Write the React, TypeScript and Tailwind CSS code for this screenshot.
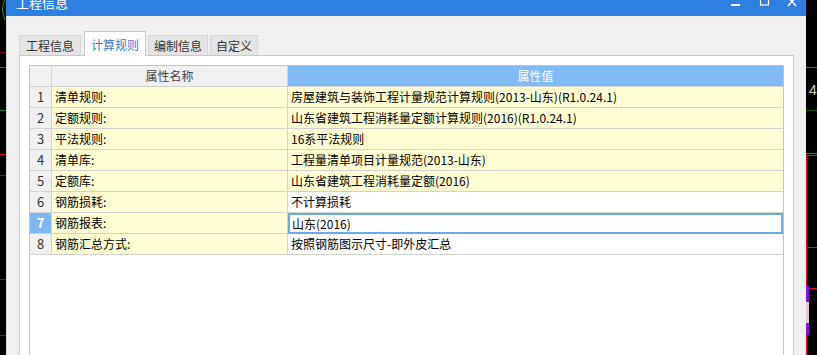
import React from "react";

const rows = [
  { n: 1, name: "清单规则:", value: "房屋建筑与装饰工程计量规范计算规则(2013-山东)(R1.0.24.1)", yellow: true },
  { n: 2, name: "定额规则:", value: "山东省建筑工程消耗量定额计算规则(2016)(R1.0.24.1)", yellow: true },
  { n: 3, name: "平法规则:", value: "16系平法规则", yellow: true },
  { n: 4, name: "清单库:", value: "工程量清单项目计量规范(2013-山东)", yellow: true },
  { n: 5, name: "定额库:", value: "山东省建筑工程消耗量定额(2016)", yellow: true },
  { n: 6, name: "钢筋损耗:", value: "不计算损耗", yellow: false },
  { n: 7, name: "钢筋报表:", value: "山东(2016)", yellow: false, selected: true },
  { n: 8, name: "钢筋汇总方式:", value: "按照钢筋图示尺寸-即外皮汇总", yellow: false },
];

const font = { fontFamily: '"Noto Sans CJK SC", "Noto Sans", sans-serif' };

function LeftStrip() {
  return (
    <svg width="6" height="355" className="block shrink-0">
      <rect width="6" height="355" fill="#000" />
      <path d="M5 0 Q0 8 5 20" stroke="#1f9a2a" strokeWidth="1" fill="none" />
      <rect x="0" y="52" width="6" height="1" fill="#7a0a0a" />
      <rect x="0" y="67" width="6" height="1" fill="#1d7d22" />
      <rect x="0" y="110" width="6" height="1" fill="#1d7d22" />
      <rect x="0" y="154" width="6" height="1" fill="#e01010" />
      <rect x="0" y="175" width="6" height="1" fill="#8a0c0c" />
      <rect x="0" y="279" width="6" height="1" fill="#8a0c0c" />
      <rect x="0" y="335" width="6" height="1" fill="#8a0c0c" />
    </svg>
  );
}

function RightStrip() {
  return (
    <svg width="11" height="355" className="block shrink-0">
      <rect width="11" height="355" fill="#000" />
      <rect x="0" y="67" width="11" height="1" fill="#1d8d22" />
      <text x="3" y="95" fontSize="14" fill="#cfcfcf" fontFamily="Liberation Sans, sans-serif">4</text>
      <rect x="0" y="110" width="11" height="1" fill="#0f5a12" />
      <rect x="0" y="153" width="11" height="1" fill="#6b6b10" />
      <rect x="0" y="155" width="11" height="1" fill="#e01010" />
      <rect x="0" y="155" width="1" height="200" fill="#e01010" />
      <rect x="0" y="247" width="11" height="1" fill="#e01010" />
      <rect x="0" y="288" width="11" height="1" fill="#e01010" />
      <rect x="0" y="286" width="3" height="16" fill="#8a10e0" />
      <rect x="0" y="302" width="3" height="21" fill="#e8c8c8" />
      <rect x="0" y="323" width="3" height="12" fill="#8a10e0" />
    </svg>
  );
}

function WindowControls() {
  return (
    <svg width="66" height="16" className="block">
      <rect x="0" y="4" width="9" height="2" fill="#fff" />
      <rect x="29.5" y="-4" width="8" height="9" stroke="#fff" strokeWidth="1.2" fill="none" />
      <path d="M57 -3 L65 6 M65 -3 L57 6" stroke="#fff" strokeWidth="1.6" />
    </svg>
  );
}

export default function App() {
  return (
    <div className="flex w-[817px] h-[355px] overflow-hidden bg-black" style={font}>
      <LeftStrip />
      <div className="flex flex-col w-[800px] shrink-0 bg-[#f0f0f0]">
        <div className="flex h-[16px] shrink-0 items-start justify-between bg-[#2d7fe0] overflow-hidden pl-[10px] pr-[9px]">
          <span className="text-[13px] leading-[13px] text-white mt-[-4px]">工程信息</span>
          <WindowControls />
        </div>
        <div className="flex flex-col flex-1 px-[12px] pt-[15px] border-l border-[#d8d8d8]">
          <div className="flex items-end h-[24px] relative z-10">
            <div className="h-[20px] px-[6px] flex items-center bg-[#e4e4e4] border border-b-0 border-[#d6d6d6] text-[12px] text-[#333]">工程信息</div>
            <div className="h-[25px] mb-[-1px] ml-[3px] px-[6px] pt-[4px] flex items-start bg-white border border-b-0 border-[#c8c8c8] text-[12px] text-[#3d78c8]">计算规则</div>
            <div className="h-[20px] ml-[2px] px-[5px] flex items-center bg-[#e4e4e4] border border-b-0 border-[#d6d6d6] text-[12px] text-[#333]">编制信息</div>
            <div className="h-[20px] ml-[2px] px-[5px] flex items-center bg-[#e4e4e4] border border-b-0 border-[#d6d6d6] text-[12px] text-[#333]">自定义</div>
          </div>
          <div className="h-[400px] shrink-0 bg-white border border-[#c8c8c8] p-[9px]">
            <div className="h-full border border-[#c4c4c4] bg-white text-[12px] text-black">
              <div className="flex h-[21px] border-b border-[#d2d2d2]">
                <div className="w-[22px] shrink-0 bg-[#f0f0f0] border-r border-[#d2d2d2]" />
                <div className="w-[236px] shrink-0 bg-[#f0f0f0] border-r border-[#d2d2d2] flex items-center justify-center text-[#444]">属性名称</div>
                <div className="flex-1 bg-[#80bbf7] flex items-center justify-center text-white">属性值</div>
              </div>
              {rows.map((r) => (
                <div key={r.n} className="flex h-[21px] border-b border-[#d2d2d2]">
                  <div
                    className={
                      r.selected
                        ? "w-[22px] shrink-0 bg-[#7db7f6] border-r border-[#d2d2d2] flex items-center justify-center text-white font-bold text-[13px]"
                        : "w-[22px] shrink-0 bg-[#f0f0f0] border-r border-[#d2d2d2] flex items-center justify-center text-[#333] text-[13px]"
                    }
                  >
                    {r.n}
                  </div>
                  <div className="w-[236px] shrink-0 bg-[#fffed3] border-r border-[#d2d2d2] flex items-center pl-[3px] whitespace-nowrap">
                    {r.name}
                  </div>
                  {r.selected ? (
                    <div className="flex-1 mb-[-1px] relative z-10 border-2 border-[#6fa8e6] bg-white flex items-center pl-[2px] whitespace-nowrap">
                      {r.value}
                    </div>
                  ) : (
                    <div
                      className={
                        r.yellow
                          ? "flex-1 bg-[#fffed3] flex items-center pl-[3px] whitespace-nowrap"
                          : "flex-1 bg-white flex items-center pl-[3px] whitespace-nowrap"
                      }
                    >
                      {r.value}
                    </div>
                  )}
                </div>
              ))}
            </div>
          </div>
        </div>
      </div>
      <RightStrip />
    </div>
  );
}
